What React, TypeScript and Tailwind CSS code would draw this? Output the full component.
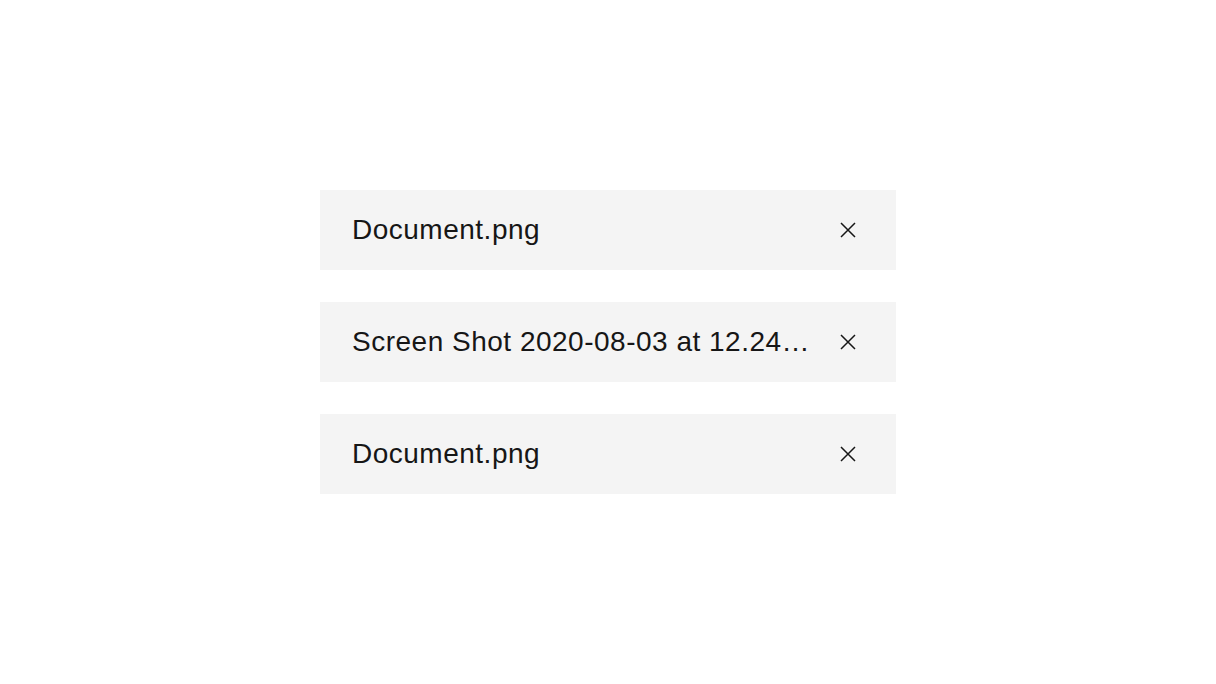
const files = ["Document.png", "Screen Shot 2020-08-03 at 12.24.43 PM.png", "Document.png"];

function CloseIcon() {
  return (
    <svg width="16" height="16" viewBox="0 0 16 16" className="shrink-0 text-[#161616]">
      <path d="M1 1 L15 15 M15 1 L1 15" stroke="currentColor" strokeWidth="1.5" fill="none" />
    </svg>
  );
}

export default function App() {
  return (
    <div
      className="flex min-h-screen flex-col items-center justify-center gap-8 bg-white"
      style={{ fontFamily: '"Liberation Sans", Arial, sans-serif' }}
    >
      {files.map((name, i) => (
        <div key={i} className="flex h-20 w-[576px] items-center bg-[#f4f4f4] pl-8 pr-10">
          <span className="min-w-0 flex-1 truncate text-[28px] leading-normal tracking-[0.5px] text-[#161616]">
            {name}
          </span>
          <button className="ml-6 flex items-center justify-center">
            <CloseIcon />
          </button>
        </div>
      ))}
    </div>
  );
}
